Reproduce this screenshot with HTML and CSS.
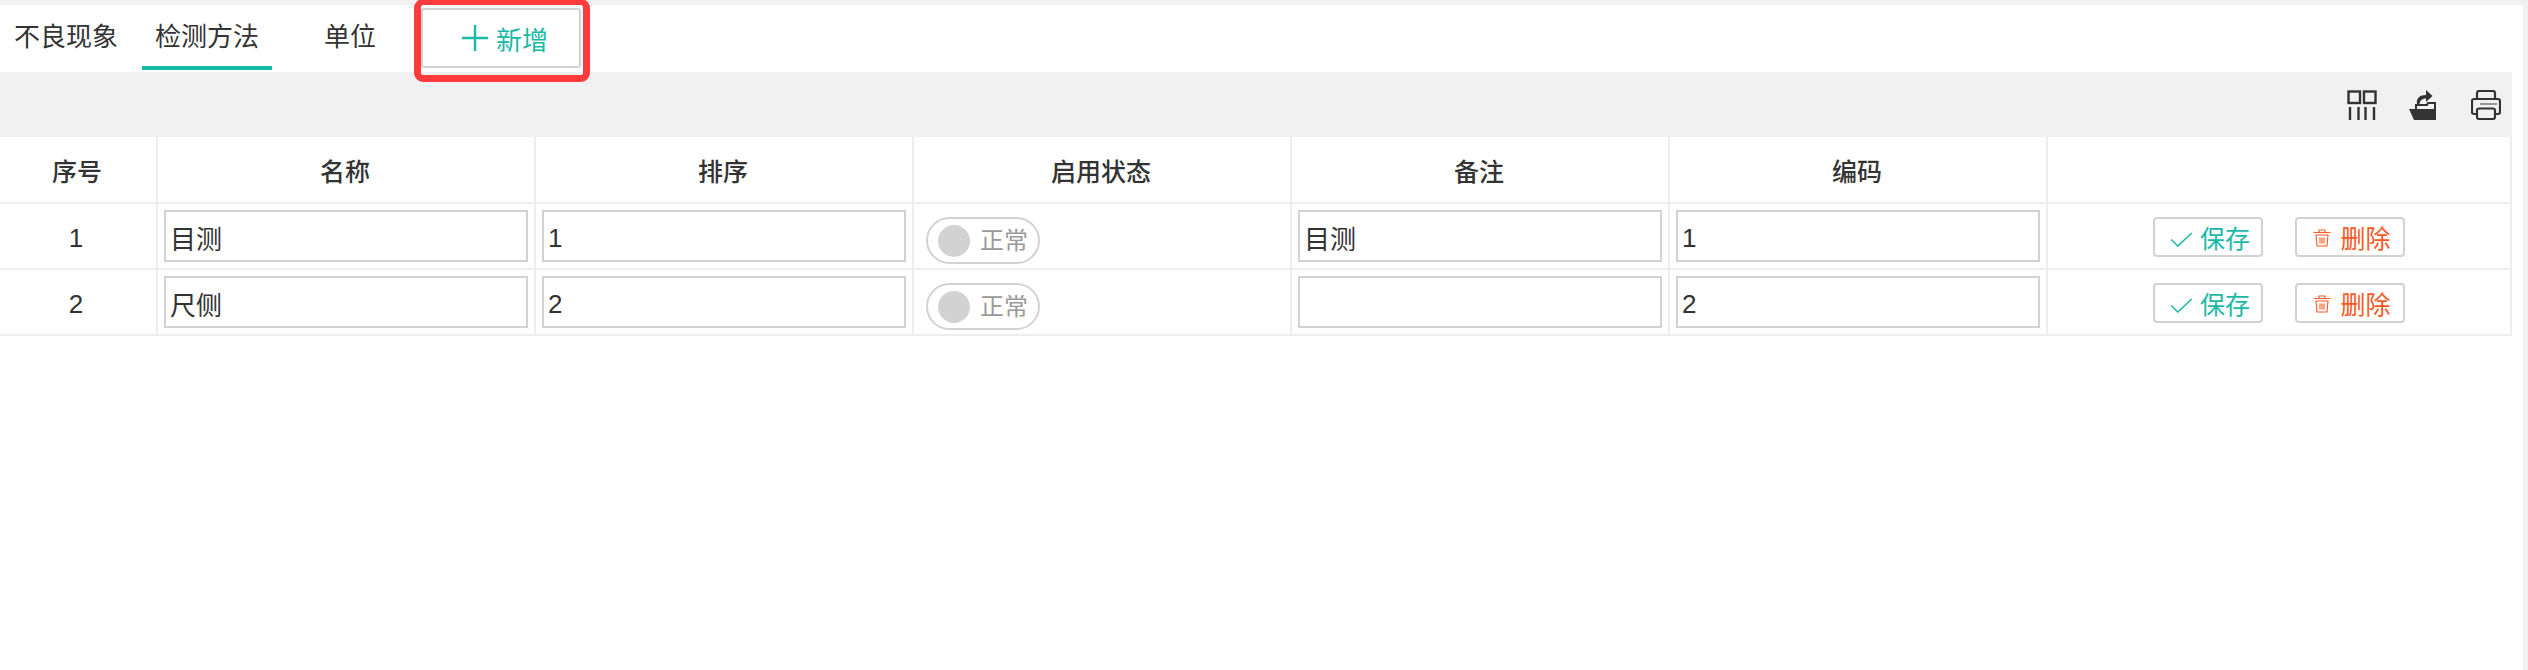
FILE: index.html
```html
<!DOCTYPE html>
<html lang="zh">
<head>
<meta charset="utf-8">
<title>检测方法</title>
<link rel="stylesheet" href="styles.css">
</head>
<body>
<div class="panel">
  <div class="tabs">
    <div class="tab tab-first">不良现象</div>
    <div class="tab tab-active">检测方法</div>
    <div class="tab tab-unit">单位</div>
    <button class="add"><svg class="add-icon" viewBox="0 0 26 26"><path d="M13 0v26M0 13h26" fill="none" stroke="currentColor" stroke-width="2.4"/></svg><span>新增</span></button>
    <div class="mark"></div>
  </div>
  <div class="toolbar">
    <svg class="tool" viewBox="0 0 30 30"><g fill="none" stroke="#333" stroke-width="2.4"><rect x="1.5" y="1.5" width="11.5" height="11.5"/><rect x="17" y="1.5" width="11.5" height="11.5"/><path d="M3 17v13M11.5 17v13M18.5 17v13M27 17v13"/></g></svg>
    <svg class="tool" viewBox="0 0 30 30"><path d="M0 19h26v11H5z" fill="#333"/><path d="M7 19v-4h11l1-2h7v17" fill="none" stroke="#333" stroke-width="2"/><path d="M8 14c-1-6 3-9 9-9V0l6.500 6L17 12V8.500c-3 0-6 1.500-6.500 5.500z" fill="#333"/></svg>
    <svg class="tool" viewBox="0 0 30 30"><g fill="none" stroke="#333" stroke-width="2.2" stroke-linejoin="round"><path d="M6 9V3a2 2 0 0 1 2-2h14a2 2 0 0 1 2 2v6"/><path d="M6 24H3a2 2 0 0 1-2-2V11a2 2 0 0 1 2-2h24a2 2 0 0 1 2 2v11a2 2 0 0 1-2 2h-3"/><rect x="6" y="18.500" width="18" height="10.500" rx="2"/></g><path d="M9 14h17" stroke="#777" stroke-width="1.500"/></svg>
  </div>
  <div class="row head">
    <div class="cell">序号</div>
    <div class="cell">名称</div>
    <div class="cell">排序</div>
    <div class="cell">启用状态</div>
    <div class="cell">备注</div>
    <div class="cell">编码</div>
    <div class="cell"></div>
  </div>
  <div class="row">
    <div class="cell num">1</div>
    <div class="cell"><input class="field" value="目测"></div>
    <div class="cell"><input class="field digits" value="1"></div>
    <div class="cell cell-left"><div class="switch"><i class="knob"></i><span>正常</span></div></div>
    <div class="cell"><input class="field" value="目测"></div>
    <div class="cell"><input class="field digits" value="1"></div>
    <div class="cell actions">
      <button class="btn save"><svg class="check" viewBox="0 0 24 16"><path d="M1 8l7 7L23 1" fill="none" stroke="currentColor" stroke-width="1.6"/></svg>保存</button>
      <button class="btn del"><svg class="trash" viewBox="0 0 18 18"><path d="M0.500 3.500h17M6 3.500V1h6v2.500M2.500 6h13M3 6l1 11h10l1-11M7 8.500v6M9 8.500v6M11 8.500v6" fill="none" stroke="currentColor" stroke-width="1.100"/></svg>删除</button>
    </div>
  </div>
  <div class="row">
    <div class="cell num">2</div>
    <div class="cell"><input class="field" value="尺侧"></div>
    <div class="cell"><input class="field digits" value="2"></div>
    <div class="cell cell-left"><div class="switch"><i class="knob"></i><span>正常</span></div></div>
    <div class="cell"><input class="field" value=""></div>
    <div class="cell"><input class="field digits" value="2"></div>
    <div class="cell actions">
      <button class="btn save"><svg class="check" viewBox="0 0 24 16"><path d="M1 8l7 7L23 1" fill="none" stroke="currentColor" stroke-width="1.6"/></svg>保存</button>
      <button class="btn del"><svg class="trash" viewBox="0 0 18 18"><path d="M0.500 3.500h17M6 3.500V1h6v2.500M2.500 6h13M3 6l1 11h10l1-11M7 8.500v6M9 8.500v6M11 8.500v6" fill="none" stroke="currentColor" stroke-width="1.100"/></svg>删除</button>
    </div>
  </div>
</div>
</body>
</html>
```
FILE: styles.css
```css
* { box-sizing: border-box; }
html, body { margin: 0; height: 100%; }
body {
  background: #f1f1f1;
  padding: 5px 5px 0 0;
  overflow: hidden;
  font-family: "Liberation Sans", "Noto Sans CJK SC", sans-serif;
  color: #333;
}
.panel { background: #fff; height: 100%; }
.tabs { height: 67px; display: flex; align-items: stretch; position: relative; }
.tab { font-size: 26px; line-height: 64px; height: 67px; text-align: center; }
.tab-first { width: 142px; padding-right: 10px; }
.tab-active { width: 130px; position: relative; }
.tab-active::after { content: ""; position: absolute; left: 0; right: 0; bottom: 2px; height: 4px; background: #15b9a5; }
.tab-unit { width: 142px; padding-left: 14px; }
.add {
  width: 160px; height: 60px; margin: 3px 0 0 7px;
  border: 2px solid #d2d2d2; border-radius: 3px; background: #fff; color: #1ab9a6;
  display: flex; align-items: center; justify-content: center; gap: 8px; padding: 0 0 0 8px;
  font: 26px "Liberation Sans", "Noto Sans CJK SC", sans-serif;
}
.add-icon { width: 26px; height: 30px; }
.mark { position: absolute; left: 414px; top: -6px; width: 176px; height: 83px; border: 7px solid #ff3b3b; border-top-width: 6px; border-radius: 9px; }
.toolbar {
  height: 65px; width: 2512px; background: #f1f1f1;
  display: flex; justify-content: flex-end; align-items: center; gap: 32px; padding-right: 11px;
}
.tool { width: 30px; height: 30px; }
.row {
  width: 2512px; height: 66px;
  display: grid; grid-template-columns: 158px 378px 378px 378px 378px 378px 464px;
  border-bottom: 2px solid #eee;
}
.head { height: 67px; }
.cell {
  border-right: 2px solid #eee; display: flex; align-items: center; justify-content: center;
  padding: 0 6px; font-size: 26px;
}
.head .cell { font-weight: 500; font-size: 25px; padding-right: 8px; padding-left: 6px; }
.cell-left { justify-content: flex-start; padding-left: 12px; }
.num { padding: 5px 4px 0 0; }
.field {
  width: 100%; height: 52px; border: 2px solid #d2d2d2; background: #fff; padding: 2px 4px 0;
  font: 26px "Liberation Sans", "Noto Sans CJK SC", sans-serif; color: #333; outline: 0;
}
.digits { padding: 5px 4px 0; }
.switch {
  width: 114px; height: 47px; border: 2px solid #d2d2d2; border-radius: 24px;
  display: flex; align-items: center; padding-left: 10px; gap: 10px; color: #999; font-size: 24px; margin-top: 9px;
}
.switch span { margin-top: -4px; }
.knob { width: 32px; height: 32px; border-radius: 50%; background: #d2d2d2; flex: none; }
.actions { gap: 32px; padding: 2px 0 0; }
.btn {
  height: 40px; width: 110px; border: 2px solid #d2d2d2; border-radius: 4px; background: #fff;
  font: 25px "Liberation Sans", "Noto Sans CJK SC", sans-serif;
  display: flex; align-items: center; justify-content: center; padding: 0 0 0 4px;
}
.save { color: #1ab9a6; gap: 7px; }
.del { color: #ff5722; gap: 9px; }
.check { width: 23px; height: 15px; margin-top: 4px; }
.trash { width: 18px; height: 18px; margin-top: 2px; }
```
